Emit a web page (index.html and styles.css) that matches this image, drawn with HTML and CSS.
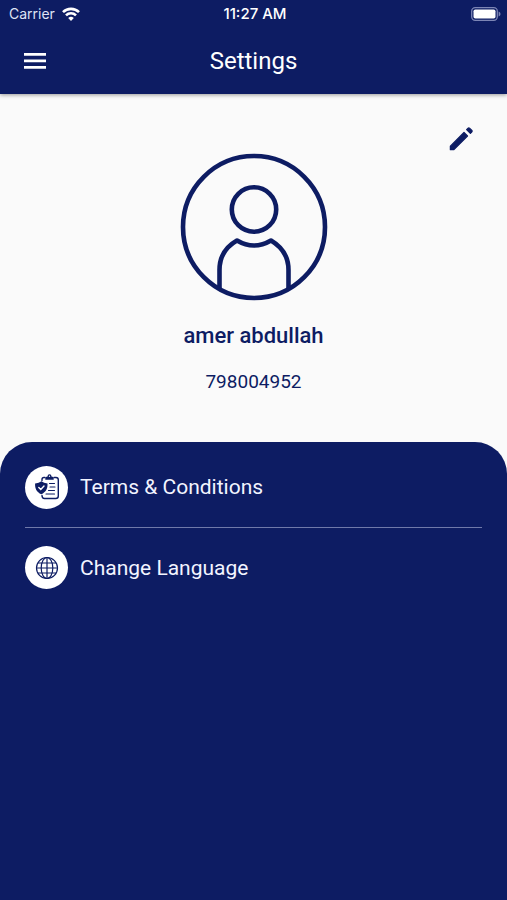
FILE: index.html
```html
<!DOCTYPE html>
<html lang="en">
<head>
    <title>Settings</title>
    <meta charset="UTF-8">
    <meta name="viewport" content="width=device-width, initial-scale=1">
    <link rel="stylesheet" href="styles.css">
</head>
<body>
    <header class="header">
        <div class="status-bar">
            <div class="carrier">
                <span>Carrier</span>
                <svg width="18" height="14" viewBox="0 0 18 14" fill="none" stroke="#fff" stroke-width="2.6">
                    <path d="M1 5.2a11.3 11.3 0 0 1 16 0"/>
                    <path d="M4 8.4a7 7 0 0 1 10 0"/>
                    <path d="M9 14l-2.8-3a4 4 0 0 1 5.6 0z" fill="#fff" stroke="none"/>
                </svg>
            </div>
            <span class="time">11:27 AM</span>
            <svg class="battery" width="30" height="14" viewBox="0 0 30 14">
                <rect x="0.7" y="0.7" width="25.6" height="12.6" rx="3.5" fill="none" stroke="#7c85b5" stroke-width="1.3"/>
                <rect x="2.5" y="2.5" width="22" height="9" rx="1.8" fill="#fff"/>
                <path d="M27.6 4.5c2.5 1 2.5 4 0 5z" fill="#7c85b5"/>
            </svg>
        </div>
        <div class="app-bar">
            <button class="icon-button" type="button" aria-label="Menu">
                <svg width="24" height="16" viewBox="0 0 24 16" fill="#fff">
                    <path d="M1 0h22v2.7H1zM1 6.5h22v2.7H1zM1 13h22v2.7H1z"/>
                </svg>
            </button>
            <h1>Settings</h1>
        </div>
    </header>

    <main>
        <section class="profile">
            <button class="icon-button edit" type="button" aria-label="Edit profile">
                <svg width="30" height="30" viewBox="0 0 24 24" fill="#0d1c63" stroke="#0d1c63" stroke-width="1" stroke-linejoin="round">
                    <path d="M3.500 17.700v2.800h2.800L17.200 9.600l-2.800-2.800zM20.700 6.300a.8.8 0 0 0 0-1.100l-1.900-1.900a.8.8 0 0 0-1.100 0l-1.200 1.200 3 3z"/>
                </svg>
            </button>
            <svg class="avatar" width="148" height="148" viewBox="0 0 148 148" fill="none" stroke="#0d1c63" stroke-width="4.6" stroke-linejoin="round">
                <circle cx="74" cy="74" r="71"/>
                <circle cx="74" cy="56.5" r="22.2"/>
                <path d="M39.500 135v-18c0-13 6-23 17.500-29.500 11 6.500 23 6.500 34 0 11 6.500 17.500 16.500 17.500 29.500v18"/>
            </svg>
            <h2>amer abdullah</h2>
            <p class="phone">798004952</p>
        </section>

        <nav class="options">
            <a class="option" href="#terms">
                <span class="option-icon">
                    <svg width="28" height="28" viewBox="0 0 28 28" fill="none" stroke="#0d1c63" stroke-width="1.4" stroke-linecap="round">
                        <path d="M9 7.500V6.500Q9 4.500 11 4.500h1M21 4.500h2q2.300 0 2.300 2.300V23q0 2.500-2.500 2.500H11.500Q9 25.500 9 22.500"/>
                        <path d="M16.500 10.500H21.500M17 14H22M15.500 17.500H21.500M13 21h8.500" stroke-width="1.100"/>
                        <path d="M12.300 6.800V5q0-1.500 2.200-1.500Q14.500 1.200 16.500 1.200t2 2.300q2.200 0 2.200 1.500v1.800z" fill="#0d1c63" stroke="none"/>
                        <circle cx="16.500" cy="3.300" r=".7" fill="#fff" stroke="none"/>
                        <path d="M8.300 8.300q2.500 2 6.200 2.200c.3 5.200-1.500 8.500-6.200 10.800C3.600 19 1.800 15.700 2.100 10.500c3.700-.2 6.200-2.200 6.200-2.200z" fill="#0d1c63" stroke="none"/>
                        <path d="M5.800 14.500l2 2 3.200-3.500" stroke="#fff"/>
                    </svg>
                </span>
                Terms &amp; Conditions
            </a>
            <a class="option" href="#language">
                <span class="option-icon">
                    <svg width="24" height="24" viewBox="0 0 24 24" fill="none" stroke="#0d1c63" stroke-width="1.2">
                        <circle cx="12" cy="12" r="10.5"/>
                        <ellipse cx="12" cy="12" rx="5.8" ry="10.5"/>
                        <path d="M12 1.500v21M1.500 12h21M3 7h18M3 17h18"/>
                    </svg>
                </span>
                Change Language
            </a>
        </nav>
    </main>
</body>
</html>
```
FILE: styles.css
```css
* {
    box-sizing: border-box;
}

body {
    margin: 0;
    min-height: 100vh;
    display: flex;
    flex-direction: column;
    background: #fafafa;
    color: #0d1c63;
    font-family: Roboto, sans-serif;
}

svg {
    display: block;
}

h1, h2, p {
    margin: 0;
}

.header {
    position: relative;
    background: #0d1c63;
    color: #fff;
    box-shadow: 0 1px 4px rgba(0, 0, 0, 0.4);
}

.status-bar {
    display: grid;
    grid-template-columns: 1fr auto 1fr;
    align-items: center;
    height: 28px;
    padding: 0 6px 1px 9px;
    font-family: Inter, sans-serif;
    font-size: 14px;
}

.carrier {
    display: flex;
    align-items: center;
    gap: 7px;
    color: #dfe3f5;
}

.time {
    font-size: 15px;
    font-weight: 500;
}

.battery {
    justify-self: end;
}

.app-bar {
    display: grid;
    grid-template-columns: 48px 1fr 48px;
    align-items: center;
    height: 66px;
    padding: 0 11px;
}

.app-bar h1 {
    font-size: 24px;
    font-weight: 400;
    line-height: 32px;
    text-align: center;
}

.icon-button {
    display: flex;
    align-items: center;
    justify-content: center;
    width: 48px;
    height: 48px;
    padding: 0;
    border: none;
    background: none;
    cursor: pointer;
}

.profile {
    display: flex;
    flex-direction: column;
    align-items: center;
    padding: 21px 22px 46px;
}

.edit {
    align-self: flex-end;
}

.avatar {
    margin-top: -10px;
}

.profile h2 {
    margin-top: 19px;
    font-size: 22px;
    font-weight: 500;
    line-height: 32px;
}

.phone {
    margin-top: 16px;
    font-size: 19px;
    line-height: 28px;
}

main {
    flex: 1;
    display: flex;
    flex-direction: column;
}

.options {
    flex: 1;
    padding: 5px 25px;
    border-radius: 32px 32px 0 0;
    background: #0d1c63;
}

.option {
    display: flex;
    align-items: center;
    gap: 12px;
    height: 80px;
    color: #f2f4ff;
    font-size: 21px;
    text-decoration: none;
}

.option + .option {
    border-top: 1px solid #6f79aa;
}

.option-icon {
    display: flex;
    align-items: center;
    justify-content: center;
    width: 43px;
    height: 43px;
    border-radius: 50%;
    background: #fff;
}
```
